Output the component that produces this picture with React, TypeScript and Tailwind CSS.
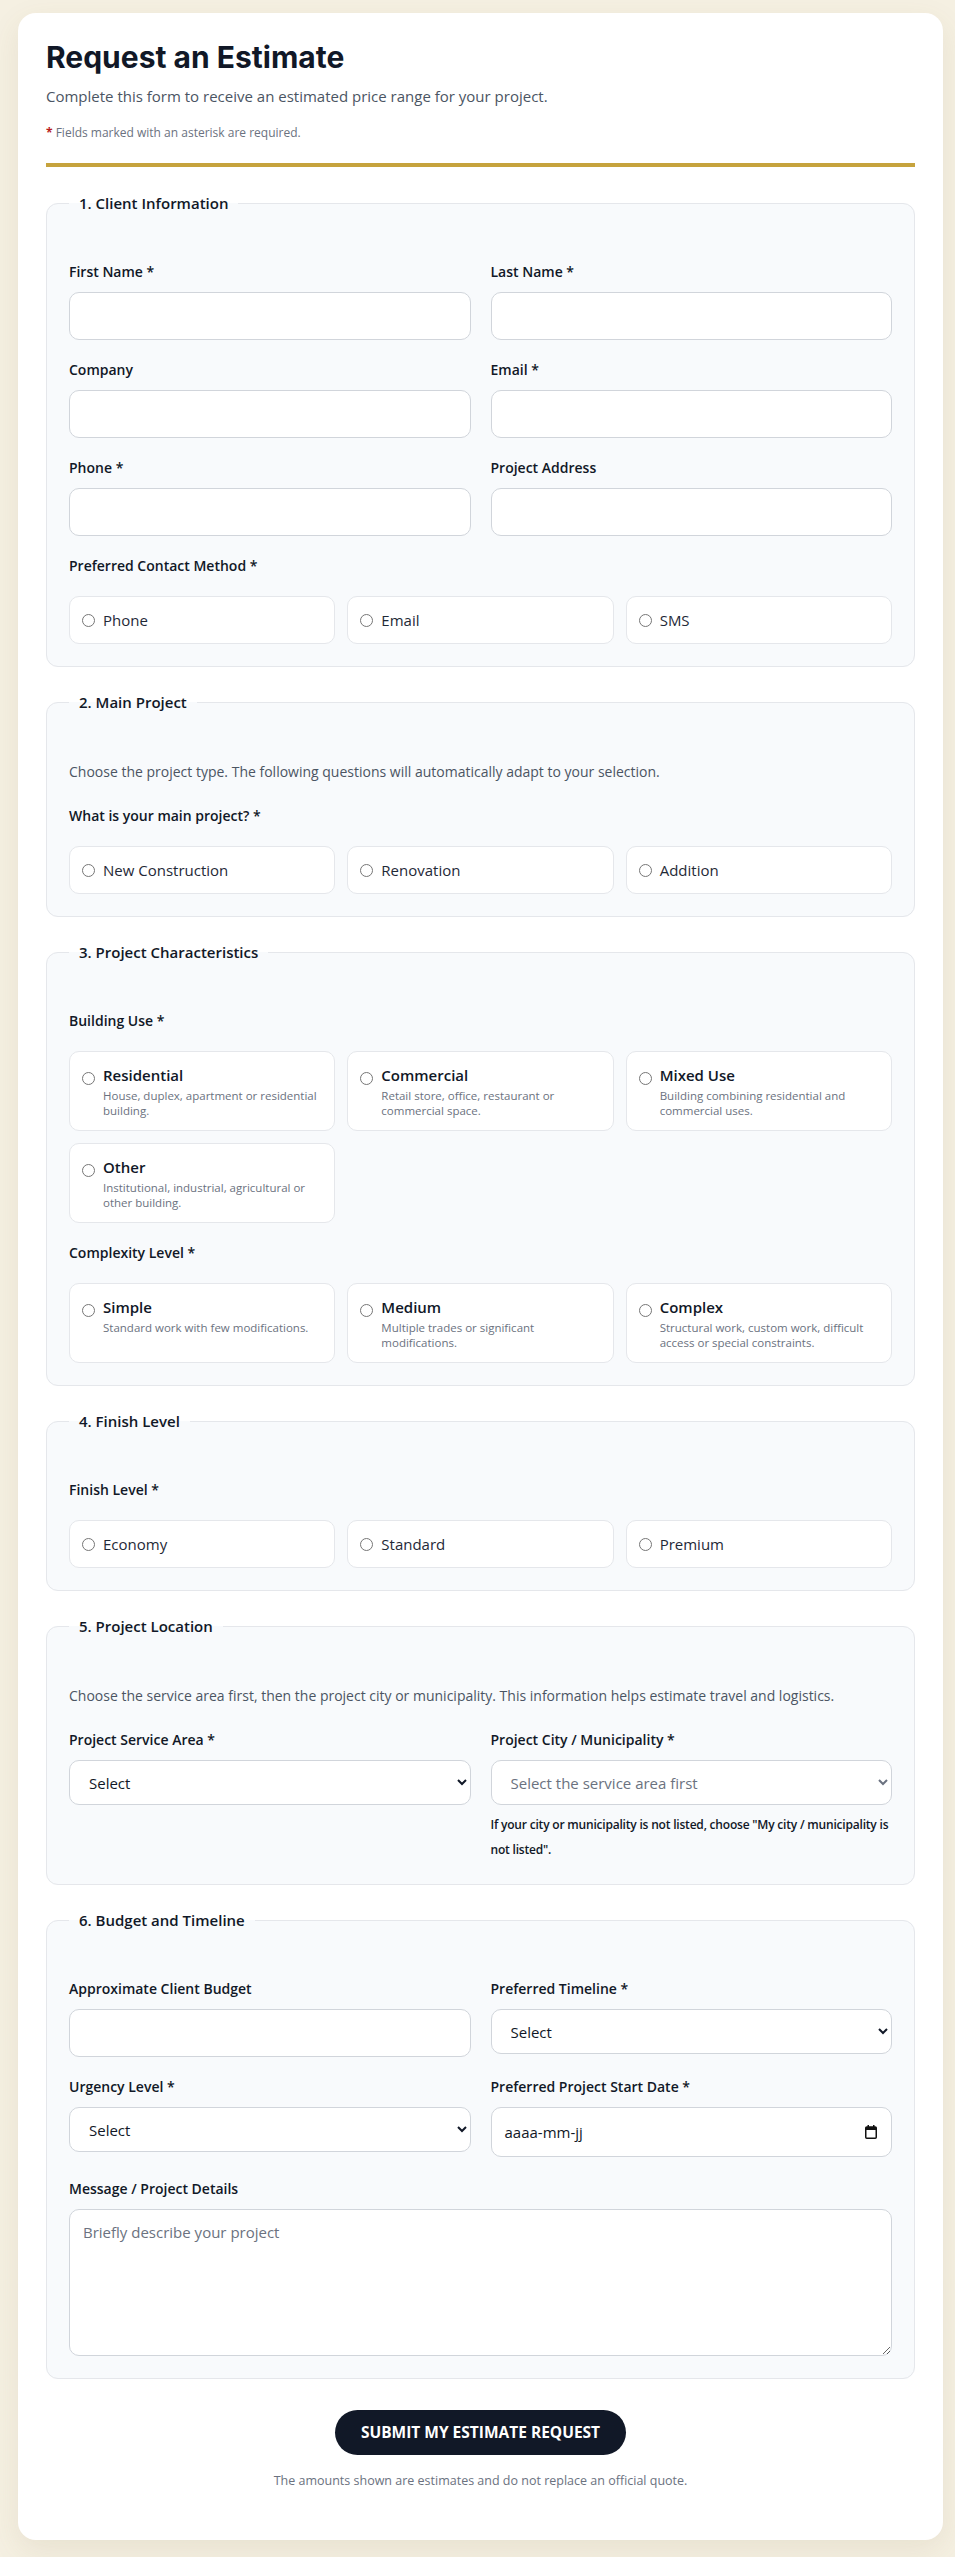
import React from "react";

const body = { fontFamily: '"Open Sans", "Noto Sans", sans-serif' };

function Label({ children }: { children: React.ReactNode }) {
  return <label className="block text-[14px] leading-[20px] font-semibold text-[#111827]">{children}</label>;
}

function Field({ label, children }: { label: string; children: React.ReactNode }) {
  return (
    <div className="flex flex-col gap-[10px]">
      <Label>{label}</Label>
      {children}
    </div>
  );
}

function TextInput() {
  return <input type="text" className="h-[48px] w-full rounded-[10px] border border-[#d1d5db] bg-white px-4 text-[15px]" />;
}

function Select({ text, disabled }: { text: string; disabled?: boolean }) {
  return (
    <select
      disabled={disabled}
      defaultValue=""
      className={`h-[45px] w-full rounded-[10px] border border-[#d1d5db] bg-white pl-[15px] pr-2 text-[15px] ${disabled ? "text-[#6b7280]" : "text-[#111827]"}`}
    >
      <option value="">{text}</option>
    </select>
  );
}

function Section({ title, children }: { title: string; children: React.ReactNode }) {
  return (
    <fieldset className="rounded-[12px] border border-[#e5e7eb] bg-[#f8fafc] px-[22px] pb-[22px]">
      <legend className="px-[10px] text-[15px] leading-[22px] font-semibold text-[#111827]">{title}</legend>
      <div className="pt-[48px]">{children}</div>
    </fieldset>
  );
}

function Radio({ name }: { name: string }) {
  return <input type="radio" name={name} className="h-[13px] w-[13px] shrink-0" />;
}

function SimpleOptions({ name, options }: { name: string; options: string[] }) {
  return (
    <div className="grid grid-cols-3 gap-[12px]">
      {options.map((o) => (
        <label key={o} className="flex items-center gap-[8px] rounded-[10px] border border-[#e5e7eb] bg-white px-[12px] py-[12px]">
          <Radio name={name} />
          <span className="text-[15px] leading-[22px] text-[#1f2937]">{o}</span>
        </label>
      ))}
    </div>
  );
}

function RichOptions({ name, options }: { name: string; options: { title: string; desc: string }[] }) {
  return (
    <div className="grid grid-cols-3 gap-[12px]">
      {options.map((o) => (
        <label key={o.title} className="flex items-start gap-[8px] rounded-[10px] border border-[#e5e7eb] bg-white px-[12px] py-[12px]">
          <div className="pt-[3px]">
            <Radio name={name} />
          </div>
          <div className="flex flex-col">
            <span className="text-[15px] leading-[22px] font-semibold text-[#111827]">{o.title}</span>
            <span className="mt-[2px] text-[11.5px] leading-[15px] text-[#6b7280]">{o.desc}</span>
          </div>
        </label>
      ))}
    </div>
  );
}

function Group({ label, children }: { label: string; children: React.ReactNode }) {
  return (
    <div className="flex flex-col gap-[20px]">
      <Label>{label}</Label>
      {children}
    </div>
  );
}

export default function App() {
  return (
    <div className="min-h-[2557px] bg-[#f5f0e2] pl-[18px] pr-[12px] pt-[13px] pb-[14px]" style={body}>
      <div className="rounded-[18px] bg-white px-7 pt-[27px] pb-[50px] shadow-[0_10px_30px_rgba(120,100,50,0.10)]">
        <h1 className="text-[30px] leading-[34px] font-bold text-[#111827]" style={{ fontFamily: "Inter, sans-serif" }}>
          Request an Estimate
        </h1>
        <p className="mt-[11px] text-[15px] leading-[22px] text-[#4b5563]">
          Complete this form to receive an estimated price range for your project.
        </p>
        <p className="mt-[17px] text-[12px] leading-[18px] text-[#6b7280]">
          <span className="font-bold text-[#b91c1c]">*</span> Fields marked with an asterisk are required.
        </p>
        <div className="mt-[21px] h-[4px] bg-[#c6a33d]" />

        <div className="mt-[25px] flex flex-col gap-[24px]">
          <Section title="1. Client Information">
            <div className="flex flex-col gap-[20px]">
              <div className="grid grid-cols-2 gap-x-[20px] gap-y-[20px]">
                <Field label="First Name *"><TextInput /></Field>
                <Field label="Last Name *"><TextInput /></Field>
                <Field label="Company"><TextInput /></Field>
                <Field label="Email *"><TextInput /></Field>
                <Field label="Phone *"><TextInput /></Field>
                <Field label="Project Address"><TextInput /></Field>
              </div>
              <Group label="Preferred Contact Method *">
                <SimpleOptions name="contact" options={["Phone", "Email", "SMS"]} />
              </Group>
            </div>
          </Section>

          <Section title="2. Main Project">
            <p className="text-[14px] leading-[22px] text-[#4b5563]">
              Choose the project type. The following questions will automatically adapt to your selection.
            </p>
            <div className="mt-[23px]">
              <Group label="What is your main project? *">
                <SimpleOptions name="main" options={["New Construction", "Renovation", "Addition"]} />
              </Group>
            </div>
          </Section>

          <Section title="3. Project Characteristics">
            <div className="flex flex-col gap-[20px]">
              <Group label="Building Use *">
                <RichOptions
                  name="use"
                  options={[
                    { title: "Residential", desc: "House, duplex, apartment or residential building." },
                    { title: "Commercial", desc: "Retail store, office, restaurant or commercial space." },
                    { title: "Mixed Use", desc: "Building combining residential and commercial uses." },
                    { title: "Other", desc: "Institutional, industrial, agricultural or other building." },
                  ]}
                />
              </Group>
              <Group label="Complexity Level *">
                <RichOptions
                  name="complexity"
                  options={[
                    { title: "Simple", desc: "Standard work with few modifications." },
                    { title: "Medium", desc: "Multiple trades or significant modifications." },
                    { title: "Complex", desc: "Structural work, custom work, difficult access or special constraints." },
                  ]}
                />
              </Group>
            </div>
          </Section>

          <Section title="4. Finish Level">
            <Group label="Finish Level *">
              <SimpleOptions name="finish" options={["Economy", "Standard", "Premium"]} />
            </Group>
          </Section>

          <Section title="5. Project Location">
            <p className="text-[14px] leading-[22px] text-[#4b5563]">
              Choose the service area first, then the project city or municipality. This information helps estimate travel and logistics.
            </p>
            <div className="mt-[23px] grid grid-cols-2 gap-x-[20px]">
              <Field label="Project Service Area *"><Select text="Select" /></Field>
              <div className="flex flex-col">
                <Field label="Project City / Municipality *"><Select text="Select the service area first" disabled /></Field>
                <p className="mt-[7px] text-[12px] leading-[25px] font-semibold tracking-[-0.2px] text-[#111827]">
                  If your city or municipality is not listed, choose "My city / municipality is not listed".
                </p>
              </div>
            </div>
          </Section>

          <Section title="6. Budget and Timeline">
            <div className="flex flex-col gap-[22px]">
              <div className="grid grid-cols-2 gap-x-[20px] gap-y-[20px]">
                <Field label="Approximate Client Budget"><TextInput /></Field>
                <Field label="Preferred Timeline *"><Select text="Select" /></Field>
                <Field label="Urgency Level *"><Select text="Select" /></Field>
                <Field label="Preferred Project Start Date *">
                  <div className="flex h-[50px] w-full items-center justify-between rounded-[10px] border border-[#d1d5db] bg-white pl-[13px] pr-[14px] text-[15px] text-[#111827]">
                    <span>aaaa-mm-jj</span>
                    <svg width="12" height="14" viewBox="0 0 12 14" fill="none">
                      <rect x="0.75" y="2" width="10.5" height="11.25" rx="1" stroke="#111" strokeWidth="1.5" />
                      <rect x="0.75" y="2" width="10.5" height="3" fill="#111" />
                      <rect x="2.5" y="0" width="1.5" height="3" fill="#111" />
                      <rect x="8" y="0" width="1.5" height="3" fill="#111" />
                    </svg>
                  </div>
                </Field>
              </div>
              <Field label="Message / Project Details">
                <textarea
                  placeholder="Briefly describe your project"
                  className="h-[147px] w-full rounded-[10px] border border-[#d1d5db] bg-white px-[13px] py-[11px] text-[15px] placeholder:text-[#6b7280]"
                />
              </Field>
            </div>
          </Section>
        </div>

        <div className="mt-[31px] flex flex-col items-center">
          <button className="h-[45px] w-[291px] rounded-full bg-[#111827] text-[15.5px] font-bold text-white">
            SUBMIT MY ESTIMATE REQUEST
          </button>
          <p className="mt-[17px] text-[12.5px] leading-[18px] text-[#6b7280]">
            The amounts shown are estimates and do not replace an official quote.
          </p>
        </div>
      </div>
    </div>
  );
}
